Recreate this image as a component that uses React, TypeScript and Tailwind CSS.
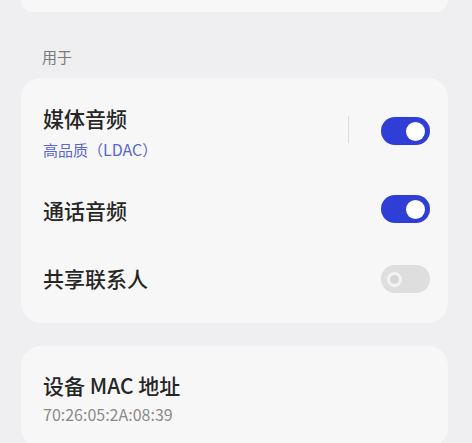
import React from "react";

const FONT = { fontFamily: '"Noto Sans CJK SC", "Noto Sans", sans-serif' };

type ToggleProps = { on: boolean };

// 开关：开启为蓝色底 + 白色圆点，关闭为灰色底 + 空心圆环
const Toggle = ({ on }: ToggleProps) => {
  if (on) {
    return (
      <div className="flex h-[28px] w-[49px] shrink-0 items-center justify-end rounded-full bg-[#2e3ed6] pr-[5px]">
        <div className="h-[19px] w-[19px] rounded-full bg-white" />
      </div>
    );
  }
  return (
    <div className="flex h-[28px] w-[49px] shrink-0 items-center justify-start rounded-full bg-[#dedede] pl-[6px]">
      <div className="h-[15px] w-[15px] rounded-full border-[3px] border-[#f3f3f3] bg-[#d6d6d6]" />
    </div>
  );
};

export default function App() {
  return (
    <div style={FONT} className="h-[443px] w-[472px] overflow-hidden bg-[#efeef0] pl-[21px] pr-[24px]">
      {/* 上一个卡片的底部 */}
      <div className="h-[12px] rounded-b-[20px] bg-[#f7f7f7]" />

      <div className="pl-[21px] pt-[35px] pb-[11px] text-[15px] leading-[20px] text-[#7a7a7a]">用于</div>

      <div className="rounded-[20px] bg-[#f7f7f7] pb-[30px] pl-[22px] pr-[18px] pt-[27px]">
        {/* 媒体音频 */}
        <div className="flex items-start">
          <div className="flex-1">
            <div className="text-[21px] font-medium leading-[26px] text-[#262626]">媒体音频</div>
            <div className="mt-[7px] text-[15px] leading-[22px] text-[#5866cf]">
              高品质（<span className="text-[16px]">LDAC</span>）
            </div>
          </div>
          <div className="mt-[11px] h-[27px] w-[1px] bg-[#dcdcdc]" />
          <div className="ml-[32px] mt-[12px]">
            <Toggle on />
          </div>
        </div>

        {/* 通话音频 */}
        <div className="mt-[34px] flex items-start">
          <div className="mt-[2px] flex-1 text-[21px] font-medium leading-[26px] text-[#262626]">通话音频</div>
          <Toggle on />
        </div>

        {/* 共享联系人 */}
        <div className="mt-[42px] flex items-start">
          <div className="flex-1 text-[21px] font-medium leading-[26px] text-[#262626]">共享联系人</div>
          <Toggle on={false} />
        </div>
      </div>

      {/* 设备 MAC 地址 */}
      <div className="mt-[23px] rounded-[20px] bg-[#f7f7f7] pb-[24px] pl-[22px] pt-[26px]">
        <div className="text-[21px] font-medium leading-[26px] text-[#262626]">设备 MAC 地址</div>
        <div className="mt-[6px] text-[16px] leading-[20px] text-[#8a8a8a]">70:26:05:2A:08:39</div>
      </div>
    </div>
  );
}
